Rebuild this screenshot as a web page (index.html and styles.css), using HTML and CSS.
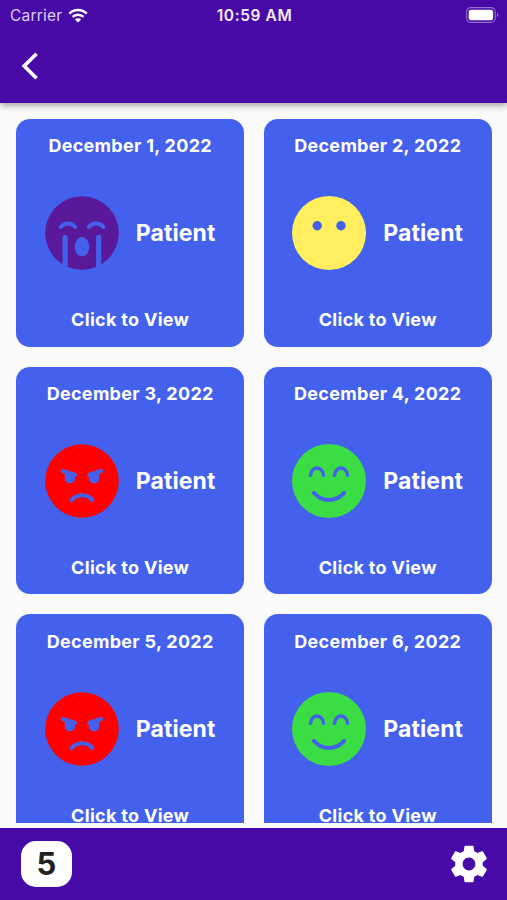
FILE: index.html
```html
<!DOCTYPE html>
<html lang="en">
<head>
    <meta charset="UTF-8">
    <title>Patient Log</title>
    <link rel="stylesheet" href="styles.css">
</head>
<body>

<!-- Face icons -->
<svg class="sprites" width="0" height="0">
    <symbol id="face-cry" viewBox="0 0 74 74">
        <circle class="face" cx="37" cy="37" r="36.8"/>
        <path class="line" d="M15.8 31C19 26.2 27 26.2 30.2 31M44 31C47.2 26.2 55.2 26.2 58.4 31"/>
        <path class="hole" d="M17.5 41a2 2 0 0 1 2-2h1.2a2 2 0 0 1 2 2V74h-5.2zM51.1 41a2 2 0 0 1 2-2h1.2a2 2 0 0 1 2 2V74h-5.2z"/>
        <ellipse class="hole" cx="37" cy="50.8" rx="7.3" ry="9.7"/>
    </symbol>
    <symbol id="face-blank" viewBox="0 0 74 74">
        <circle class="face" cx="37" cy="37" r="37"/>
        <circle class="hole" cx="25.2" cy="29.8" r="4.7"/>
        <circle class="hole" cx="49" cy="29.8" r="4.7"/>
    </symbol>
    <symbol id="face-angry" viewBox="0 0 74 74">
        <circle class="face" cx="37" cy="37" r="36.8"/>
        <path class="line" d="M17.8 27L30 30.8M56.2 27L44 30.8"/>
        <path class="hole" d="M19.8 29.5L30 32.4V34.500a5.100 5.100 0 0 1-10.200 0zM54.2 29.5L44 32.4V34.500a5.100 5.100 0 0 0 10.200 0z"/>
        <path class="line" d="M26.6 56C32 49.6 42 49.6 47.4 56"/>
    </symbol>
    <symbol id="face-smile" viewBox="0 0 74 74">
        <circle class="face" cx="37" cy="37" r="37"/>
        <path class="line eyes" d="M18.4 31.3C20.4 21.6 29.6 21.6 31.6 31.3M42.4 31.3C44.4 21.6 53.6 21.6 55.6 31.3"/>
        <path class="line" d="M21.8 48.8C29.8 58.4 44.2 58.4 52.2 48.8"/>
    </symbol>
</svg>

<div class="app">
    <header class="header">
        <div class="status">
            <div class="carrier">
                <span>Carrier</span>
                <svg class="wifi" width="20" height="15" viewBox="0 0 20 15">
                    <path d="M1.3 5.6C6.2 .9 13.8 .9 18.7 5.6M4.5 8.8C7.6 5.9 12.4 5.9 15.5 8.8" fill="none" stroke="#fff" stroke-width="2.5"/>
                    <path d="M6.9 11.4C8.7 9.8 11.3 9.8 13.1 11.4L10 14.5z" fill="#fff"/>
                </svg>
            </div>
            <span class="time">10:59 AM</span>
            <svg class="battery" width="33" height="16" viewBox="0 0 33 16">
                <rect x=".6" y=".6" width="28.6" height="14.8" rx="4.3" fill="none" stroke="#9070cc" stroke-width="1.1"/>
                <rect x="2.7" y="2.7" width="24.4" height="10.6" rx="2.4" fill="#fff"/>
                <path d="M31 5.8c1.8.8 1.8 3.6 0 4.4z" fill="#9070cc"/>
            </svg>
        </div>
        <svg class="back" width="18" height="28" viewBox="0 0 18 28">
            <path d="M15.6 1.8L3.2 14L15.6 26.2" fill="none" stroke="#fff" stroke-width="3.7"/>
        </svg>
    </header>

    <main class="list">
        <div class="card">
            <div class="date">December 1, 2022</div>
            <div class="person"><svg class="icon purple"><use href="#face-cry"/></svg><span>Patient</span></div>
            <div class="view">Click to View</div>
        </div>
        <div class="card">
            <div class="date">December 2, 2022</div>
            <div class="person"><svg class="icon yellow"><use href="#face-blank"/></svg><span>Patient</span></div>
            <div class="view">Click to View</div>
        </div>
        <div class="card">
            <div class="date">December 3, 2022</div>
            <div class="person"><svg class="icon red"><use href="#face-angry"/></svg><span>Patient</span></div>
            <div class="view">Click to View</div>
        </div>
        <div class="card">
            <div class="date">December 4, 2022</div>
            <div class="person"><svg class="icon green"><use href="#face-smile"/></svg><span>Patient</span></div>
            <div class="view">Click to View</div>
        </div>
        <div class="card">
            <div class="date">December 5, 2022</div>
            <div class="person"><svg class="icon red"><use href="#face-angry"/></svg><span>Patient</span></div>
            <div class="view">Click to View</div>
        </div>
        <div class="card">
            <div class="date">December 6, 2022</div>
            <div class="person"><svg class="icon green"><use href="#face-smile"/></svg><span>Patient</span></div>
            <div class="view">Click to View</div>
        </div>
    </main>

    <footer class="footer">
        <div class="count">5</div>
        <svg class="gear" width="44" height="44" viewBox="0 0 24 24">
            <path fill="#fff" d="M19.43 12.98c.04-.32.07-.64.07-.98s-.03-.66-.07-.98l2.11-1.65c.19-.15.24-.42.12-.64l-2-3.46c-.12-.22-.39-.3-.61-.22l-2.49 1c-.52-.4-1.08-.73-1.69-.98l-.38-2.65C14.46 2.18 14.25 2 14 2h-4c-.25 0-.46.18-.49.42l-.38 2.65c-.61.25-1.17.59-1.69.98l-2.49-1c-.23-.09-.49 0-.61.22l-2 3.46c-.13.22-.07.49.12.64l2.11 1.65c-.04.32-.07.65-.07.98s.03.66.07.98l-2.11 1.65c-.19.15-.24.42-.12.64l2 3.46c.12.22.39.3.61.22l2.49-1c.52.4 1.08.73 1.69.98l.38 2.65c.03.24.24.42.49.42h4c.25 0 .46-.18.49-.42l.38-2.65c.61-.25 1.17-.59 1.69-.98l2.49 1c.23.09.49 0 .61-.22l2-3.46c.12-.22.07-.49-.12-.64l-2.11-1.65zM12 15.5c-1.93 0-3.5-1.57-3.5-3.5s1.57-3.5 3.5-3.5 3.5 1.57 3.5 3.5-1.57 3.5-3.5 3.5z"/>
        </svg>
    </footer>
</div>

</body>
</html>
```
FILE: styles.css
```css
body {
    margin: 0;
    font-family: Inter, "Liberation Sans", sans-serif;
    background: #fafafa;
    color: #fff;
}

.sprites {
    display: block;
}

.app {
    display: flex;
    flex-direction: column;
    height: 900px;
    overflow: hidden;
}

.header {
    height: 103px;
    background: #480aa6;
    box-shadow: 0 2px 7px rgba(0, 0, 0, 0.4);
    z-index: 1;
}

.status {
    display: grid;
    grid-template-columns: 1fr auto 1fr;
    align-items: center;
    height: 30px;
    padding: 0 8px 0 10px;
}

.carrier {
    display: flex;
    align-items: center;
    gap: 6px;
    font-size: 15.5px;
    letter-spacing: 0.2px;
    color: #dccff0;
}

.time {
    font-size: 15.5px;
    font-weight: 600;
    letter-spacing: 0.6px;
    color: #f3eefa;
}

.battery {
    justify-self: end;
}

.back {
    display: block;
    margin: 22px 0 0 21px;
}

.list {
    flex: 1;
    display: grid;
    grid-template-columns: 1fr 1fr;
    grid-auto-rows: 227.5px;
    gap: 20.2px 20px;
    padding: 16px 15.5px 0 16.4px;
    margin-bottom: 5px;
    min-height: 0;
    overflow: hidden;
}

.card {
    display: flex;
    flex-direction: column;
    justify-content: space-between;
    align-items: center;
    box-sizing: border-box;
    padding: 16.4px 0 15px;
    border-radius: 14px;
    background: #4361ec;
}

.date, .view {
    font-size: 18px;
    line-height: 22px;
    font-weight: 700;
    letter-spacing: 0.3px;
}

.person {
    display: flex;
    align-items: center;
    gap: 17px;
    font-size: 23px;
    font-weight: 700;
    letter-spacing: 0.1px;
}

.icon {
    width: 74px;
    height: 74px;
}

.face { fill: currentColor; }
.hole { fill: #4361ec; }

.line {
    fill: none;
    stroke: #4361ec;
    stroke-width: 4;
    stroke-linecap: round;
}

.eyes { stroke-width: 3.4; }

.purple { color: #5a189a; }
.yellow { color: #ffee5d; }
.red { color: #ff0000; }
.green { color: #3ade44; }

.footer {
    display: flex;
    justify-content: space-between;
    align-items: center;
    box-sizing: border-box;
    height: 72px;
    padding: 0 16px 0 21px;
    background: #480aa6;
}

.count {
    width: 51px;
    height: 46px;
    border-radius: 15px;
    background: #fff;
    color: #212121;
    font-size: 31px;
    line-height: 45px;
    font-weight: 700;
    text-align: center;
}
```
